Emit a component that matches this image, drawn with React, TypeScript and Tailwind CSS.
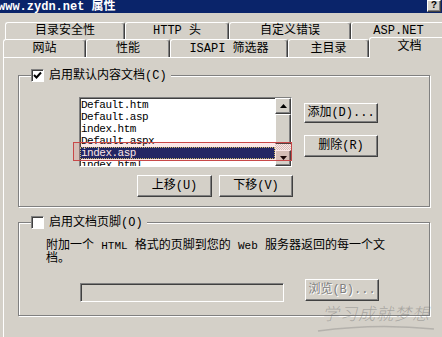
import React from "react";

const raised =
  "border border-t-white border-l-white border-r-[#404040] border-b-[#404040] shadow-[inset_-1px_-1px_0_#808080] bg-[#d4d0c8]";
const sunken =
  "border border-t-[#808080] border-l-[#808080] border-r-white border-b-white shadow-[inset_1px_1px_0_#404040]";
const etched =
  "border border-[#808080] shadow-[inset_1px_1px_0_#ffffff,1px_1px_0_#ffffff]";

function Btn({ label, disabled, className }: { label: string; disabled?: boolean; className: string }) {
  return (
    <div
      className={`${raised} ${className} flex items-center justify-center text-[12px] leading-none ${
        disabled ? "text-[#808080] [text-shadow:1px_1px_0_#fff]" : "text-black"
      }`}
    >
      {label}
    </div>
  );
}

function Check({ checked }: { checked?: boolean }) {
  return (
    <div className={`${sunken} bg-white w-[13px] h-[13px] flex items-center justify-center`}>
      {checked && (
        <svg width="9" height="9" viewBox="0 0 9 9">
          <path d="M1 4 L3.5 6.5 L8 1.5" stroke="#000" strokeWidth="2" fill="none" />
        </svg>
      )}
    </div>
  );
}

function Arrow({ up }: { up?: boolean }) {
  return (
    <div className={`${raised} h-[16px] flex items-center justify-center`}>
      <svg width="7" height="4" viewBox="0 0 7 4">
        <polygon points={up ? "3.5,0 7,4 0,4" : "0,0 7,0 3.5,4"} fill="#000" />
      </svg>
    </div>
  );
}

function Tab({ label, w }: { label: string; w: string }) {
  return (
    <div
      className={`${w} h-full shrink-0 border-t border-l border-white border-r border-r-[#404040] rounded-t-[3px] shadow-[inset_-1px_0_0_#808080] flex items-center justify-center text-[12px] leading-none whitespace-nowrap`}
    >
      {label}
    </div>
  );
}

export default function App() {
  const items = ["Default.htm", "Default.asp", "index.htm", "Default.aspx", "index.asp", "index.html"];

  return (
    <div className="w-[442px] h-[337px] overflow-hidden bg-[#d4d0c8] relative font-['Liberation_Mono','Noto_Sans_CJK_SC',monospace] text-black">
      {/* title bar */}
      <div className="h-[13px] bg-[#0a246a] flex items-center justify-between">
        <span className="ml-[-2px] text-white font-bold text-[12px] leading-none whitespace-nowrap">
          www.zydn.net 属性
        </span>
        <div className={`${raised} w-[14px] h-[12px] mr-[1px] mt-[-1px] flex items-center justify-center text-[10px] font-bold leading-none`}>
          ?
        </div>
      </div>

      {/* tabs back row */}
      <div className="mt-[9px] h-[17px] flex pl-[5px]">
        <Tab label="目录安全性" w="w-[120px]" />
        <Tab label="HTTP 头" w="w-[104px]" />
        <Tab label="自定义错误" w="w-[122px]" />
        <Tab label="ASP.NET" w="w-[95px]" />
      </div>

      {/* tabs front row */}
      <div className="h-[18px] flex items-end pl-[3px]">
        <Tab label="网站" w="w-[83px]" />
        <Tab label="性能" w="w-[84px]" />
        <Tab label="ISAPI 筛选器" w="w-[118px]" />
        <Tab label="主目录" w="w-[81px]" />
        <div className="w-[80px] h-[21px] mb-[-1px] relative z-10 bg-[#d4d0c8] shrink-0 border-t border-l border-white rounded-t-[3px] flex items-start justify-center pt-[3px] text-[12px] leading-none">
          文档
        </div>
      </div>

      {/* panel */}
      <div className="ml-[3px] h-[290px] border-t border-l border-white flex flex-col pl-[14px] pt-[17px]">
        {/* group 1 */}
        <div className={`${etched} relative w-[412px] h-[132px] pl-[60px] pt-[21px]`}>
          <div className="absolute left-[12px] top-[-7px] flex items-center gap-[3px] pr-[4px] bg-[#d4d0c8]">
            <Check checked />
            <span className="text-[12px] leading-none pl-[2px]">启用默认内容文档(C)</span>
          </div>

          <div className="flex gap-[12px]">
            <div className={`${sunken} relative w-[213px] h-[70px] bg-white flex`}>
              <div className="flex-1 pt-[1px] overflow-hidden text-[11px] tracking-[-0.5px]">
                {items.map((it) => (
                  <div
                    key={it}
                    className={`h-[12px] leading-[12px] pl-[1px] whitespace-nowrap ${
                      it === "index.asp" ? "bg-[#0a246a] text-white outline-dotted outline-1 outline-[#c8c870] -outline-offset-1" : ""
                    }`}
                  >
                    {it}
                  </div>
                ))}
              </div>
              <div className="w-[16px] flex flex-col">
                <Arrow up />
                <div className={`${raised} h-[30px]`} />
                <div className="flex-1 bg-[repeating-conic-gradient(#d4d0c8_0%_25%,#ffffff_0%_50%)] bg-size-[2px_2px]" />
                <Arrow />
              </div>
              <div className="absolute left-[-7px] top-[44px] w-[219px] h-[19px] border border-[#c84848] bg-[rgba(220,60,60,0.12)]" />
            </div>

            <div className="flex flex-col pt-[6px] gap-[12px]">
              <Btn label="添加(D)..." className="w-[74px] h-[20px]" />
              <Btn label="删除(R)" className="w-[74px] h-[22px]" />
            </div>
          </div>

          <div className="flex gap-[7px] mt-[8px] ml-[58px]">
            <Btn label="上移(U)" className="w-[75px] h-[22px]" />
            <Btn label="下移(V)" className="w-[74px] h-[22px]" />
          </div>
        </div>

        {/* group 2 */}
        <div className={`${etched} relative mt-[15px] w-[412px] h-[94px] pl-[27px] pt-[17px]`}>
          <div className="absolute left-[12px] top-[-7px] flex items-center gap-[3px] pr-[4px] bg-[#d4d0c8]">
            <Check />
            <span className="text-[12px] leading-none pl-[2px]">启用文档页脚(O)</span>
          </div>

          <div className="text-[12px] leading-[13px] whitespace-nowrap">
            附加一个 <span className="text-[11px]">HTML</span> 格式的页脚到您的 <span className="text-[11px]">Web</span> 服务器返回的每一个文
            <br />
            档。
          </div>

          <div className="flex items-start gap-[21px] mt-[13px] ml-[34px]">
            <div className={`${sunken} w-[204px] h-[19px] mt-[4px]`} />
            <Btn label="浏览(B)..." disabled className="w-[74px] h-[22px]" />
          </div>
        </div>
      </div>

      {/* watermark */}
      <div className="absolute left-[322px] top-[304px] pointer-events-none">
        <div className="whitespace-nowrap text-[17px] leading-none tracking-[1px] italic text-[rgba(110,110,110,0.45)] font-['Noto_Sans_CJK_SC',serif] font-light">
          学习成就梦想
        </div>
        <svg width="120" height="10" viewBox="0 0 120 10" className="mt-[2px] -ml-[6px]">
          <path d="M2 8 Q60 0 118 6" stroke="rgba(120,120,120,0.35)" strokeWidth="1.5" fill="none" />
        </svg>
      </div>
    </div>
  );
}
